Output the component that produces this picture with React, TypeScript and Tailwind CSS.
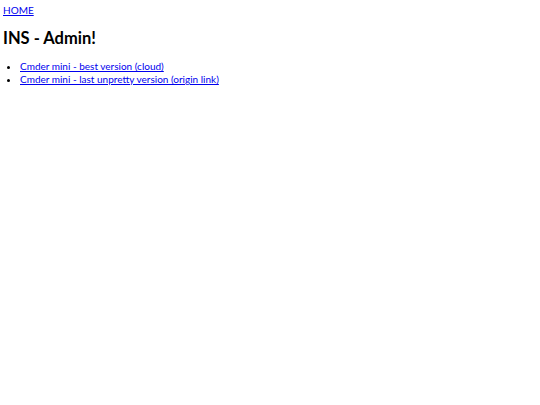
export default function App() {
  return (
    <div className="min-h-screen bg-white px-[3px] pt-[4px] text-[10px] leading-[13px] text-black [font-family:Lato,Roboto,sans-serif]">
      <a href="#" className="text-[#0000ee] underline">
        HOME
      </a>
      <h1 className="mt-[11px] mb-[12px] text-[16.5px] font-bold leading-[20px]">INS - Admin!</h1>
      <ul className="list-disc pl-[17px]">
        <li>
          <a href="#" className="text-[#0000ee] underline">
            Cmder mini - best version (cloud)
          </a>
        </li>
        <li>
          <a href="#" className="text-[#0000ee] underline">
            Cmder mini - last unpretty version (origin link)
          </a>
        </li>
      </ul>
    </div>
  )
}
